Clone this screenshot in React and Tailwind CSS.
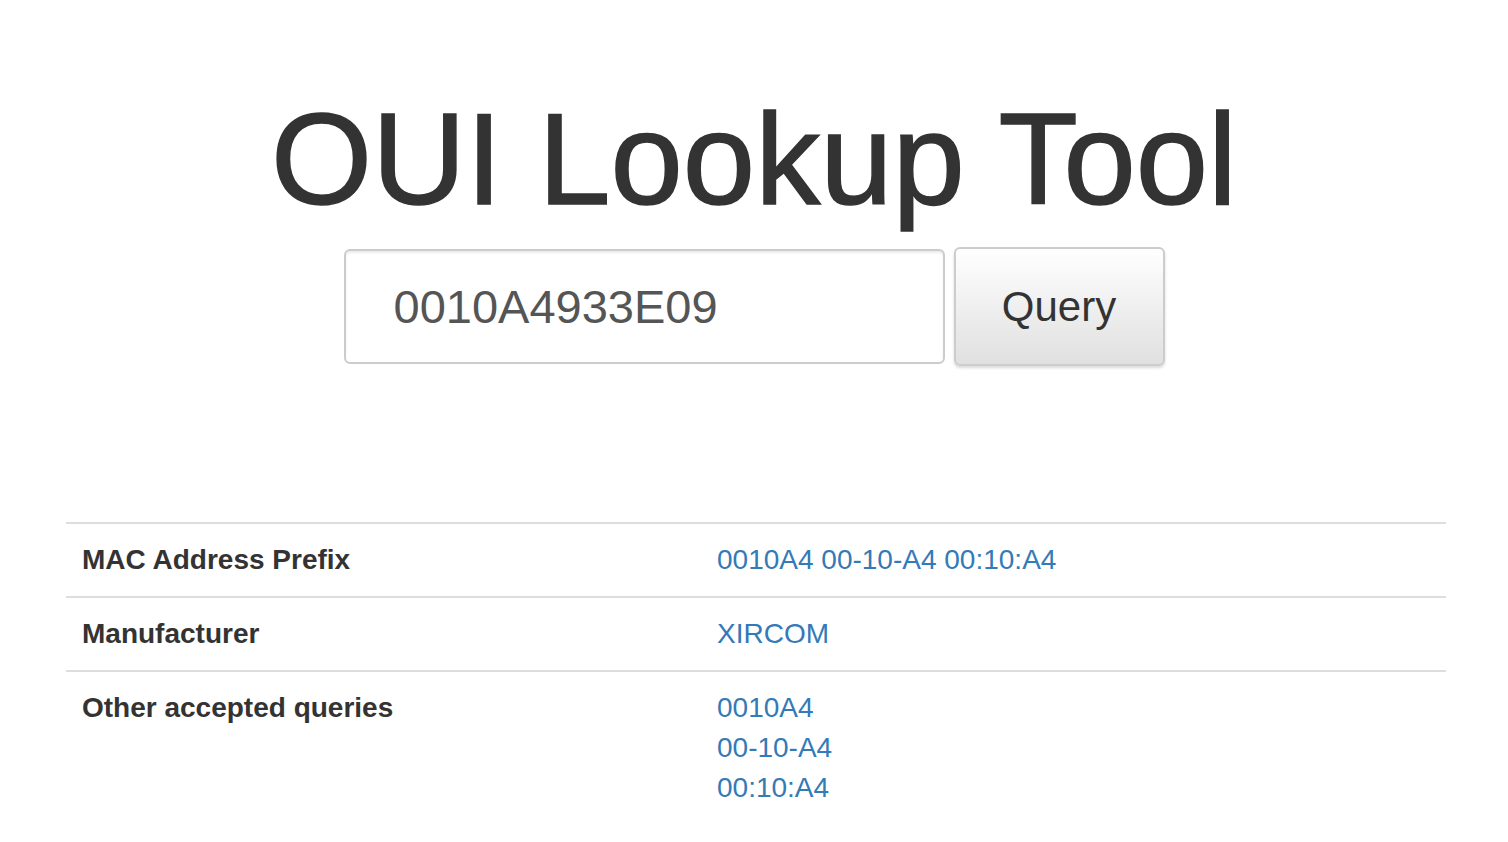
import React, { useState } from "react";

const rows = [
    { label: "MAC Address Prefix", values: ["0010A4 00-10-A4 00:10:A4"] },
    { label: "Manufacturer", values: ["XIRCOM"] },
    { label: "Other accepted queries", values: ["0010A4", "00-10-A4", "00:10:A4"] },
];

const App = () => {
    const [query, setQuery] = useState("0010A4933E09");

    return (
        <div className="min-h-screen bg-white font-['Liberation_Sans',Arial,sans-serif] text-[#333]">
            {/* Header + search */}
            <div className="flex flex-col items-center pt-[95px]">
                <h1 className="text-[130px] leading-[128px] font-normal text-[#333] [-webkit-text-stroke:1.5px_#333]">
                    OUI Lookup Tool
                </h1>
                <form
                    className="flex items-center gap-[9px] mt-[24px]"
                    onSubmit={(e) => e.preventDefault()}
                >
                    <input
                        value={query}
                        onChange={(e) => setQuery(e.target.value)}
                        className="w-[601px] h-[115px] pl-[48px] pr-4 text-[47px] text-[#555] bg-white border-2 border-[#ccc] rounded-[6px] shadow-[inset_0_2px_2px_rgba(0,0,0,0.075)] outline-none"
                    />
                    <button
                        type="submit"
                        className="w-[211px] h-[119px] text-[42px] text-[#333] border-2 border-[#ccc] rounded-[6px] bg-gradient-to-b from-white to-[#e0e0e0] shadow-[0_2px_3px_rgba(0,0,0,0.15)]"
                    >
                        Query
                    </button>
                </form>
            </div>

            {/* Result table */}
            <div className="ml-[66px] mr-[62px] mt-[156px]">
                {rows.map((row) => (
                    <div
                        key={row.label}
                        className="grid grid-cols-[635px_1fr] border-t-2 border-[#ddd] text-[28px] leading-[40px]"
                    >
                        <div className="px-4 py-[16px] font-bold">{row.label}</div>
                        <div className="px-4 py-[16px] flex flex-col">
                            {row.values.map((v) => (
                                <a key={v} href="#" className="text-[#337ab7]">
                                    {v}
                                </a>
                            ))}
                        </div>
                    </div>
                ))}
            </div>
        </div>
    );
};

export default App;
